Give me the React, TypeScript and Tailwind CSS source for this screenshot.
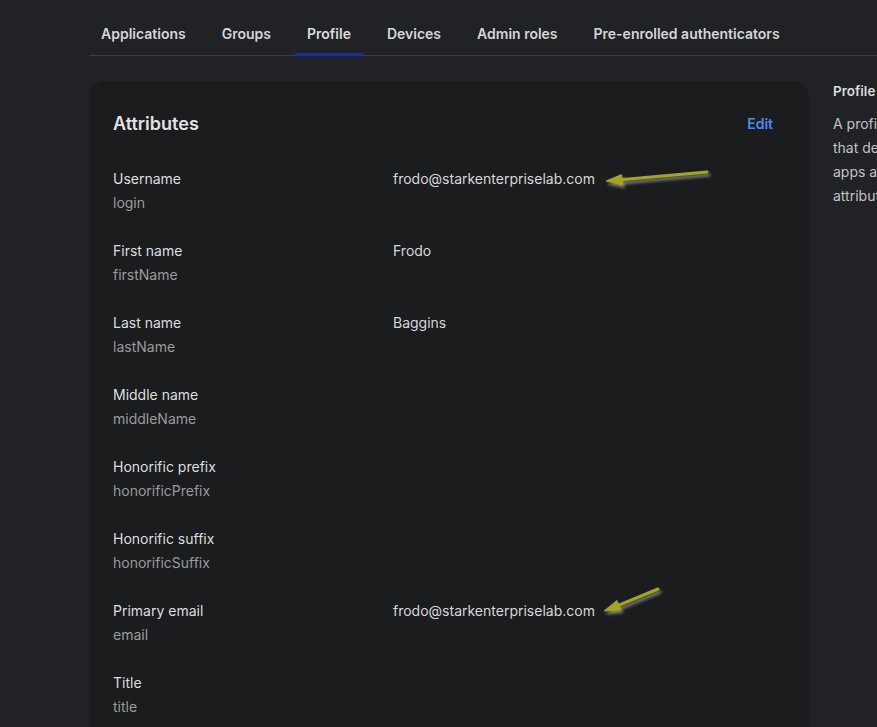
import React from 'react';

const tabs = ['Applications', 'Groups', 'Profile', 'Devices', 'Admin roles', 'Pre-enrolled authenticators'];

const attributes = [
  { label: 'Username', key: 'login', value: 'frodo@starkenterpriselab.com' },
  { label: 'First name', key: 'firstName', value: 'Frodo' },
  { label: 'Last name', key: 'lastName', value: 'Baggins' },
  { label: 'Middle name', key: 'middleName', value: '' },
  { label: 'Honorific prefix', key: 'honorificPrefix', value: '' },
  { label: 'Honorific suffix', key: 'honorificSuffix', value: '' },
  { label: 'Primary email', key: 'email', value: 'frodo@starkenterpriselab.com' },
  { label: 'Title', key: 'title', value: '' },
];

function Arrows() {
  return (
    <svg className="pointer-events-none absolute left-0 top-0" width="877" height="727" viewBox="0 0 877 727">
      <defs>
        <filter id="sh" x="-20%" y="-50%" width="140%" height="200%">
          <feDropShadow dx="2" dy="3" stdDeviation="1.4" floodColor="#8a8a8a" floodOpacity="0.9" />
        </filter>
      </defs>
      <g filter="url(#sh)" fill="#a6a614" stroke="#a6a614">
        <line x1="707" y1="172" x2="620" y2="179.7" strokeWidth="3" strokeLinecap="round" />
        <polygon points="606,181 622.3,184.6 621.5,174.6" strokeWidth="1" strokeLinejoin="round" />
        <line x1="658" y1="589" x2="617" y2="605.8" strokeWidth="3" strokeLinecap="round" />
        <polygon points="604,611 620.7,609.6 616.9,600.4" strokeWidth="1" strokeLinejoin="round" />
      </g>
    </svg>
  );
}

export default function App() {
  return (
    <div className="relative h-[727px] w-full overflow-hidden bg-[#202225] font-['Inter',sans-serif] text-sm">
      <div className="pl-[89px]">
        <div className="flex gap-3 border-b border-[#3c3e41] pt-[22px]">
          {tabs.map((t) => (
            <div
              key={t}
              className={`-mb-px px-3 pb-[7px] leading-6 font-semibold whitespace-nowrap border-b-[3px] ${
                t === 'Profile' ? 'border-[#1e2b9c] text-[#dcdcdc]' : 'border-transparent text-[#d6d6d6]'
              }`}
            >
              {t}
            </div>
          ))}
        </div>

        <div className="mt-[25px] flex gap-6">
          <div className="w-[720px] shrink-0 rounded-2xl bg-[#1a1c1e] pl-6 pr-6 pt-[29px] pb-24">
            <div className="flex items-center justify-between">
              <h2 className="text-[18px] leading-7 font-semibold text-[#e2e2e2]">Attributes</h2>
              <button className="px-3 leading-7 font-semibold text-[#4b8df0]">Edit</button>
            </div>
            <div className="mt-[29px] flex flex-col gap-6">
              {attributes.map((a) => (
                <div key={a.key} className="flex">
                  <div className="w-[280px] shrink-0">
                    <div className="leading-6 text-[#dedede]">{a.label}</div>
                    <div className="leading-6 text-[#9b9b9b]">{a.key}</div>
                  </div>
                  <div className="leading-6 text-[#d8d8d8]">{a.value}</div>
                </div>
              ))}
            </div>
          </div>

          <div className="w-[230px] shrink-0">
            <h3 className="leading-5 font-semibold text-[#dcdcdc] text-[13.5px]">Profile</h3>
            <p className="mt-[11px] leading-6 text-[#c4c4c4] whitespace-nowrap">
              A profile is a set of attributes
              <br />
              that describe a user. Some
              <br />
              apps and integrations use these
              <br />
              attributes to identify users.
            </p>
          </div>
        </div>
      </div>
      <Arrows />
    </div>
  );
}
